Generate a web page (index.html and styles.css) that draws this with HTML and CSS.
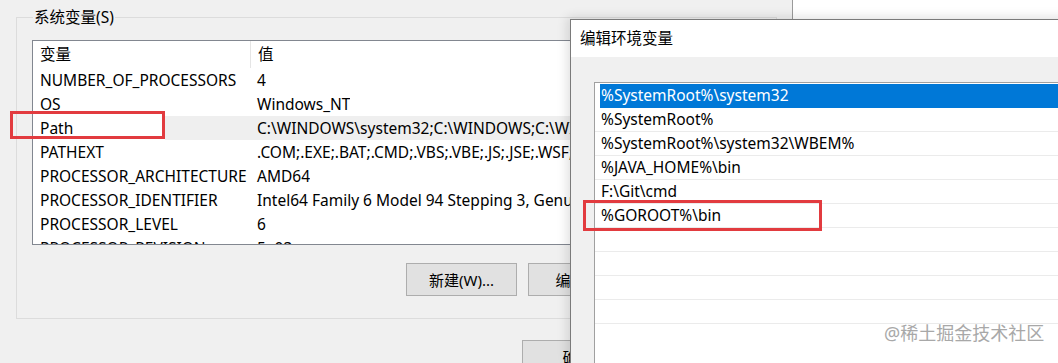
FILE: index.html
```html
<html>
    <head>
        <title>环境变量</title>
    <link rel="stylesheet" href="styles.css">
    </head>
    <body>
        <div class="main-window">
            <fieldset class="group">
                <legend>系统变量(S)</legend>
                <div class="listview">
                    <div class="lv-header">
                        <div class="col-name">变量</div>
                        <div class="col-value">值</div>
                    </div>
                    <div class="lv-body">
                        <div class="lv-row"><div class="col-name">NUMBER_OF_PROCESSORS</div><div class="col-value">4</div></div>
                        <div class="lv-row"><div class="col-name">OS</div><div class="col-value">Windows_NT</div></div>
                        <div class="lv-row hover"><div class="col-name">Path</div><div class="col-value">C:\WINDOWS\system32;C:\WINDOWS;C:\WINDOWS\System32\Wbem</div></div>
                        <div class="lv-row"><div class="col-name">PATHEXT</div><div class="col-value">.COM;.EXE;.BAT;.CMD;.VBS;.VBE;.JS;.JSE;.WSF;.WSH;.MSC</div></div>
                        <div class="lv-row"><div class="col-name">PROCESSOR_ARCHITECTURE</div><div class="col-value">AMD64</div></div>
                        <div class="lv-row"><div class="col-name">PROCESSOR_IDENTIFIER</div><div class="col-value">Intel64 Family 6 Model 94 Stepping 3, GenuineIntel</div></div>
                        <div class="lv-row"><div class="col-name">PROCESSOR_LEVEL</div><div class="col-value">6</div></div>
                        <div class="lv-row"><div class="col-name">PROCESSOR_REVISION</div><div class="col-value">5e03</div></div>
                    </div>
                </div>
                <div class="btn-row">
                    <button>新建(W)...</button>
                    <button>编辑(I)...</button>
                    <button>删除(L)</button>
                </div>
            </fieldset>
            <div class="btn-row bottom">
                <button>确定</button>
                <button>取消</button>
            </div>
        </div>

        <div class="dialog">
            <div class="title">编辑环境变量</div>
            <div class="dialog-body">
                <div class="listbox">
                    <div class="lb-item selected">%SystemRoot%\system32</div>
                    <div class="lb-item">%SystemRoot%</div>
                    <div class="lb-item">%SystemRoot%\system32\WBEM%</div>
                    <div class="lb-item">%JAVA_HOME%\bin</div>
                    <div class="lb-item">F:\Git\cmd</div>
                    <div class="lb-item">%GOROOT%\bin</div>
                    <div class="lb-item"></div>
                    <div class="lb-item"></div>
                    <div class="lb-item"></div>
                    <div class="lb-item"></div>
                </div>
            </div>
        </div>

        <!-- annotations -->
        <div class="mark mark-path"></div>
        <div class="mark mark-goroot"></div>
        <div class="watermark">@稀土掘金技术社区</div>
    </body>
</html>
```

FILE: styles.css
```css
body{
    margin:0;
    width:1058px;
    height:363px;
    overflow:hidden;
    position:relative;
    background-color:white;
    font-family:"Noto Sans","Noto Sans CJK SC",sans-serif;
    font-size:15.5px;
    color:black;
}
.main-window{
    position:absolute;
    left:0;
    top:0;
    width:792px;
    height:363px;
    overflow:hidden;
    background-color:#f0f0f0;
    border-right:1px solid #9a9a9a;
}
.group{
    margin:8px 15px 0 16px;
    padding:0 15px 0 15px;
    height:311px;
    border:1px solid #dcdcdc;
    box-sizing:border-box;
}
.group legend{
    padding:0 1px;
    margin-left:1px;
    line-height:18px;
}
.listview{
    margin-top:14px;
    width:600px;
    height:203px;
    border:1px solid #828790;
    background-color:white;
    overflow:hidden;
}
.lv-header{
    display:flex;
    height:27px;
    line-height:27px;
}
.lv-header .col-name{
    border-right:1px solid #e5e5e5;
}
.lv-row{
    display:flex;
    height:24px;
    line-height:24px;
}
.col-name{
    width:210px;
    padding-left:7px;
    white-space:nowrap;
    flex-shrink:0;
}
.col-value{
    padding-left:7px;
    white-space:nowrap;
    overflow:hidden;
}
.lv-row.hover{
    background:linear-gradient(to right,white 132px,#efefef 132px);
}
.btn-row{
    display:flex;
    justify-content:flex-end;
    gap:11px;
    margin-top:18px;
}
.btn-row.bottom{
    margin-top:21px;
    padding-right:37px;
}
button{
    width:111px;
    height:33px;
    background-color:#e1e1e1;
    border:1px solid #adadad;
    font-family:"Noto Sans","Noto Sans CJK SC",sans-serif;
    font-size:15px;
    color:black;
    padding:0;
}
.dialog{
    position:absolute;
    left:570px;
    top:19px;
    width:500px;
    height:344px;
    overflow:hidden;
    border:1px solid #7a7a7a;
    border-bottom:none;
    background-color:#f0f0f0;
    box-shadow:-3px -2px 10px rgba(0,0,0,0.12);
}
.title{
    height:37px;
    line-height:37px;
    padding-left:9px;
    background-color:white;
}
.dialog-body{
    padding:25px 0 0 23px;
}
.listbox{
    border:1px solid #a0a0a0;
    background-color:white;
    padding-top:1px;
    height:290px;
}
.lb-item{
    height:23px;
    line-height:23px;
    padding-left:6px;
    border-bottom:1px solid #ebebeb;
    white-space:nowrap;
}
.lb-item.selected{
    margin-left:5px;
    padding-left:1px;
    background-color:#0078d7;
    color:white;
    border-bottom-color:#0078d7;
}
.mark{
    position:absolute;
    border:3px solid #e23b3f;
}
.mark-path{
    left:10px;
    top:111px;
    width:149px;
    height:22px;
}
.mark-goroot{
    left:583px;
    top:200px;
    width:233px;
    height:25px;
}
.watermark{
    position:absolute;
    left:884px;
    top:321px;
    font-size:18px;
    line-height:24px;
    color:#a8a8a8;
    text-shadow:0 0 2px white;
}
```
